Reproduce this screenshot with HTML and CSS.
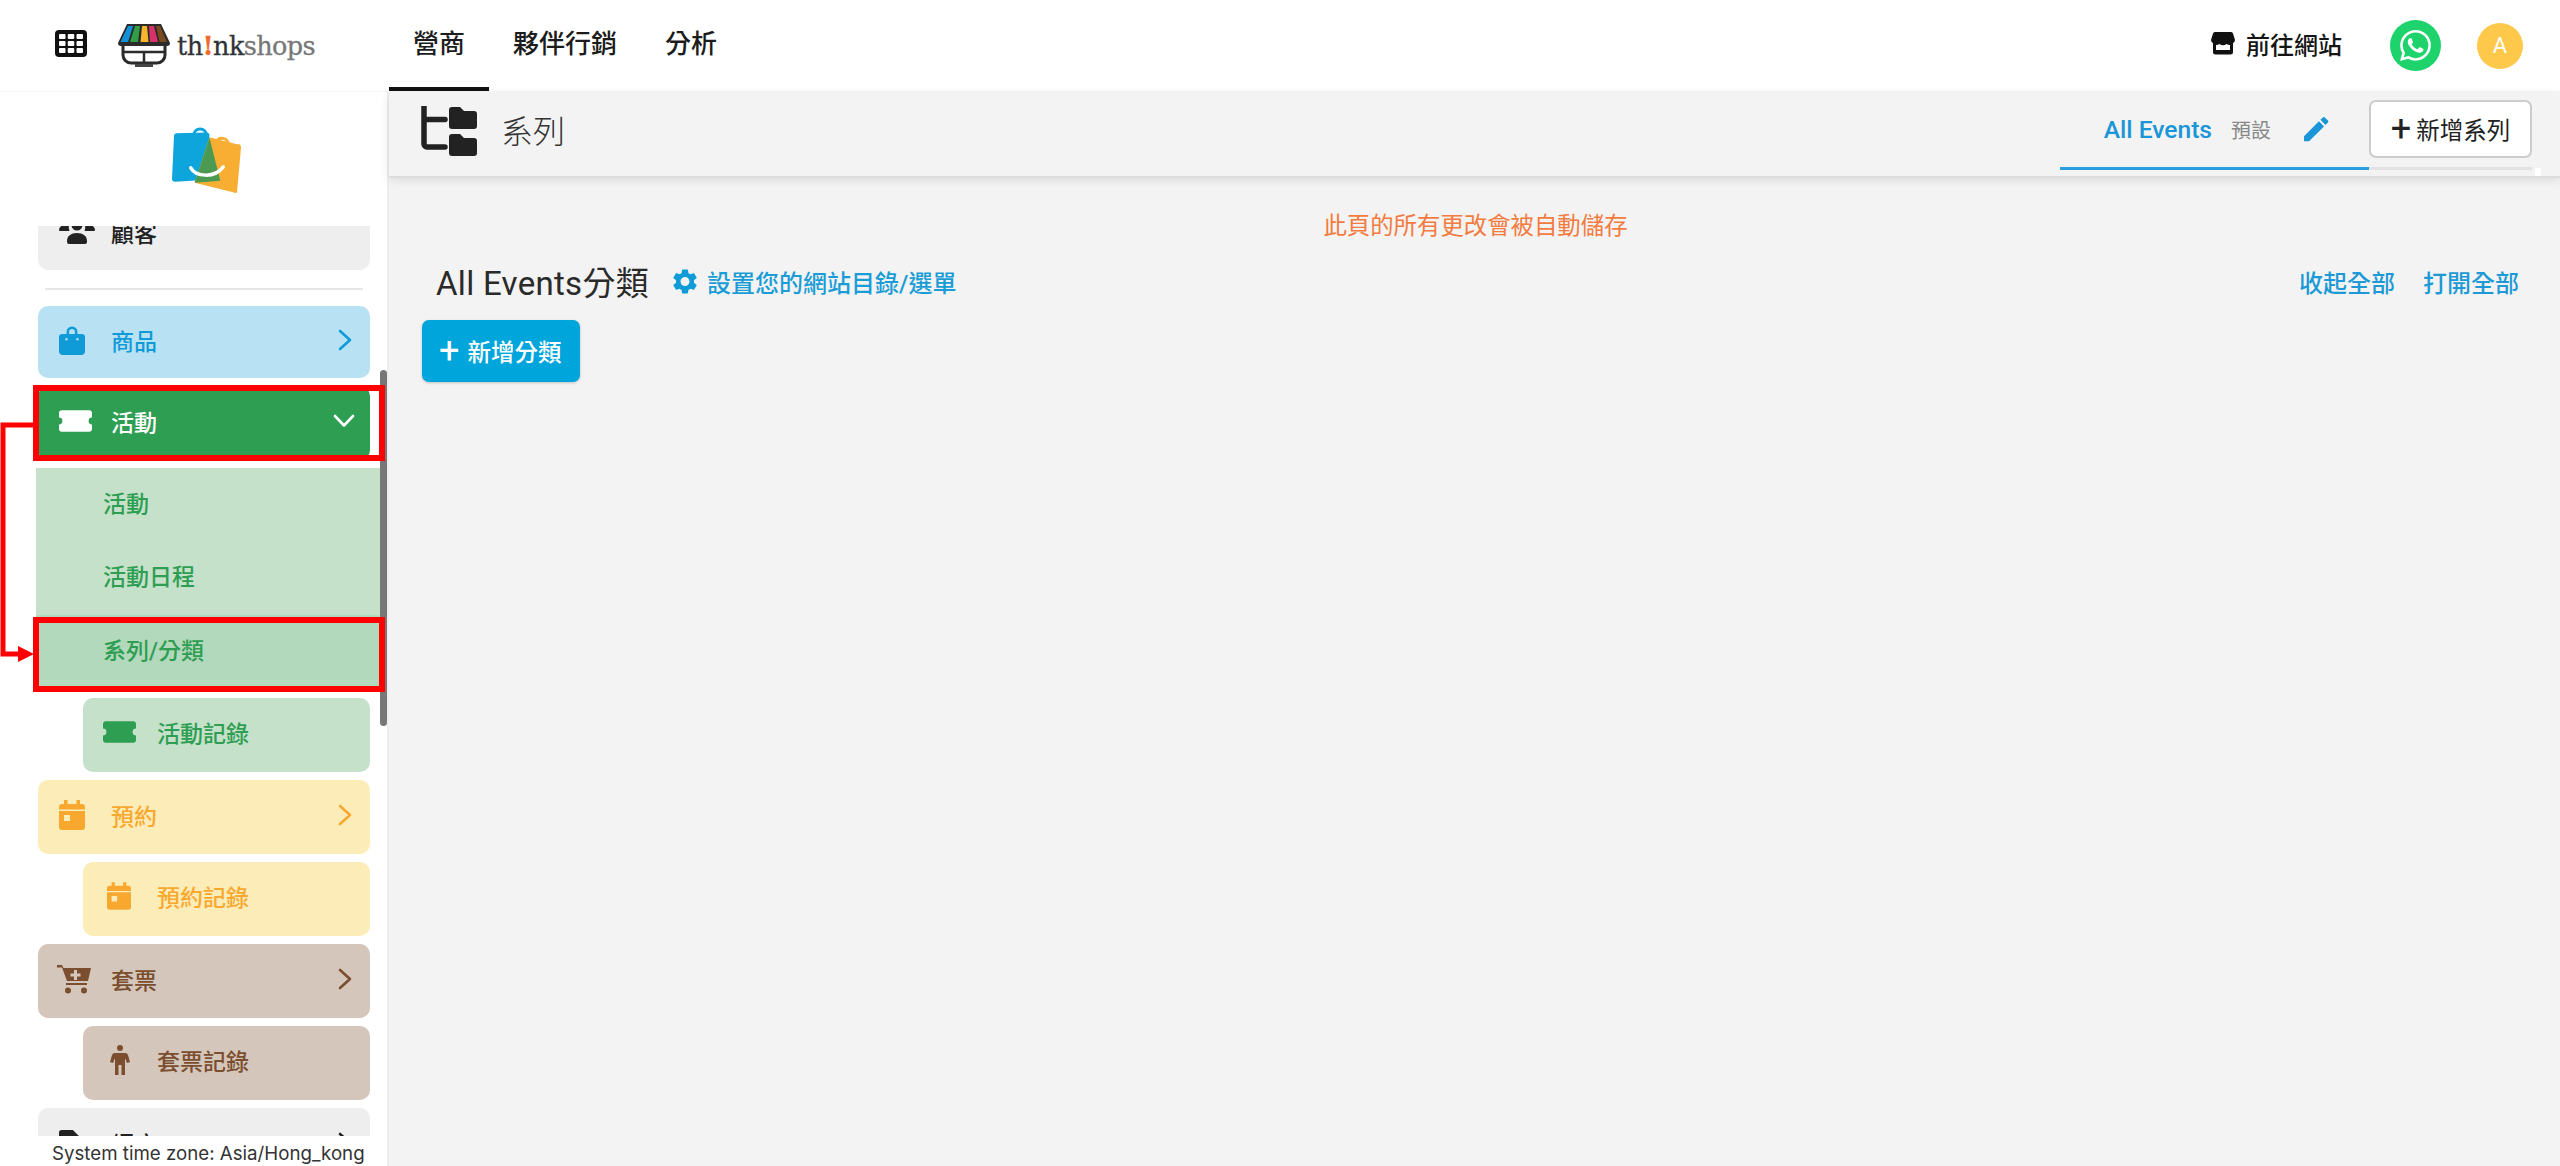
FILE: index.html
```html
<!DOCTYPE html>
<html lang="zh-Hant">
<head>
<meta charset="utf-8">
<title>系列</title>
<link rel="stylesheet" href="styles.css">
</head>
<body>
<svg class="defs" width="0" height="0" aria-hidden="true">
  <symbol id="i-chev" viewBox="0 0 14 22"><path d="M2 2l10 9-10 9" fill="none" stroke="currentColor" stroke-width="2.6" stroke-linecap="round" stroke-linejoin="round"/></symbol>
  <symbol id="i-bag" viewBox="0 0 26 30"><path d="M7.5 10V7a5.5 5.5 0 0 1 11 0v3h-2.6V7a2.9 2.9 0 0 0-5.800 0v3z" fill="currentColor"/><path d="M3 9h20a3 3 0 0 1 3 3v14a4 4 0 0 1-4 4H4a4 4 0 0 1-4-4V12a3 3 0 0 1 3-3zm4.500 4a1.300 1.300 0 1 0 0 2.600 1.300 1.300 0 0 0 0-2.600zm11 0a1.300 1.300 0 1 0 0 2.600 1.300 1.300 0 0 0 0-2.600z" fill="currentColor" fill-rule="evenodd"/></symbol>
  <symbol id="i-ticket" viewBox="0 0 34 22"><path d="M3 0h28a3 3 0 0 1 3 3v4.500a3.500 3.500 0 0 0 0 7V19a3 3 0 0 1-3 3H3a3 3 0 0 1-3-3v-4.500a3.500 3.500 0 0 0 0-7V3a3 3 0 0 1 3-3z" fill="currentColor"/></symbol>
  <symbol id="i-cal" viewBox="0 0 26 30"><path d="M5 0h3.500v4h9V0H21v4h2a3 3 0 0 1 3 3v20a3 3 0 0 1-3 3H3a3 3 0 0 1-3-3V7a3 3 0 0 1 3-3h2zM0 9.500v1.500h26V9.500zM5 15v6h6v-6z" fill="currentColor" fill-rule="evenodd"/></symbol>
  <symbol id="i-cart" viewBox="0 0 34 30"><path d="M0 1h5l1.500 3H34l-3 13H10L5 3.500H0z" fill="currentColor"/><path d="M9 19h21v2H9z" fill="currentColor"/><path d="M20 6v3.500h3.500v3H20V16h-3v-3.500h-3.500v-3H17V6z" fill="#d5c6bc"/><circle cx="11" cy="26.500" r="3" fill="currentColor"/><circle cx="27" cy="26.500" r="3" fill="currentColor"/></symbol>
  <symbol id="i-person" viewBox="0 0 20 30"><circle cx="10" cy="3" r="3" fill="currentColor"/><path d="M5 8h10c1.500 0 2.500.7 3 2l2 7-3 1-2-5v17h-3.500V20h-3v10H5V13l-2 5-3-1 2-7c.5-1.300 1.500-2 3-2z" fill="currentColor"/></symbol>
  <symbol id="i-users" viewBox="0 0 36 24"><circle cx="18" cy="5" r="5.500" fill="currentColor"/><path d="M0 10c0-3 3-5 6-5 1.500 0 3 .6 4 1.500C9.500 8 10 9.500 10.500 11H1a1 1 0 0 1-1-1z M36 10c0-3-3-5-6-5-1.500 0-3 .6-4 1.500.5 1.500 0 3-.5 4.500H35a1 1 0 0 0 1-1z" fill="currentColor"/><path d="M8 21c0-5 4-8 10-8s10 3 10 8v1a2 2 0 0 1-2 2H10a2 2 0 0 1-2-2z" fill="currentColor"/></symbol>
  <symbol id="i-doc" viewBox="0 0 30 30"><path d="M3 0h13l12 12v15a3 3 0 0 1-3 3H3a3 3 0 0 1-3-3V3a3 3 0 0 1 3-3z" fill="currentColor"/></symbol>
  <symbol id="i-folder" viewBox="0 0 28 22"><path d="M0 3a3 3 0 0 1 3-3h8l4 4h10a3 3 0 0 1 3 3v12a3 3 0 0 1-3 3H3a3 3 0 0 1-3-3z" fill="currentColor"/></symbol>
</svg>

<header class="topbar">
  <div class="brand">
    <svg class="grid-icon" viewBox="0 0 32 27" aria-hidden="true">
      <rect width="32" height="27" rx="4" fill="#111"/>
      <g fill="#fff"><rect x="4" y="4" width="6.500" height="5" rx="1"/><rect x="12.750" y="4" width="6.500" height="5" rx="1"/><rect x="21.500" y="4" width="6.500" height="5" rx="1"/><rect x="4" y="11" width="6.500" height="5" rx="1"/><rect x="12.750" y="11" width="6.500" height="5" rx="1"/><rect x="21.500" y="11" width="6.500" height="5" rx="1"/><rect x="4" y="18" width="6.500" height="5" rx="1"/><rect x="12.750" y="18" width="6.500" height="5" rx="1"/><rect x="21.500" y="18" width="6.500" height="5" rx="1"/></g>
    </svg>
    <svg class="store-logo" viewBox="0 0 54 44" aria-hidden="true">
      <path d="M6 20v12a8 8 0 0 0 8 8h26a8 8 0 0 0 8-8V20z" fill="#fff" stroke="#2b2b2b" stroke-width="3"/>
      <path d="M6 29h42M27 29v10" stroke="#2b2b2b" stroke-width="2.500"/>
      <path d="M18 42.500h18" stroke="#444" stroke-width="3"/>
      <path d="M10 1h34l9 19a3 3 0 0 1-3 3H4a3 3 0 0 1-3-3z" fill="#2b2b2b"/>
      <path d="M11 3h5l-5 16H3.500z" fill="#1591d8"/>
      <path d="M18 3h5l-2 16h-8z" fill="#2f9e44"/>
      <path d="M25 3h5l1.500 16h-8z" fill="#f7b52c"/>
      <path d="M32 3h5l4 16h-8z" fill="#d8326b"/>
      <path d="M39 3h4l7 16h-7.500z" fill="#7a4a21"/>
    </svg>
    <span class="wordmark">th<span class="wm-bang">!</span>nk<span class="wm-light">shops</span></span>
  </div>
  <nav class="mainnav">
    <a class="mainnav-item is-active">營商</a>
    <a class="mainnav-item">夥伴行銷</a>
    <a class="mainnav-item">分析</a>
  </nav>
  <div class="top-actions">
    <a class="visit-link">
      <svg class="store-icon" viewBox="0 0 24 24" aria-hidden="true"><path d="M4 1h16a2 2 0 0 1 2 1.500L24 9a3.500 3.500 0 0 1-2 3.200V21a2.500 2.500 0 0 1-2.500 2.500h-15A2.500 2.500 0 0 1 2 21v-8.800A3.500 3.500 0 0 1 0 9l2-6.500A2 2 0 0 1 4 1zm1 13v5h14v-5a6 6 0 0 1-3.500-1 6 6 0 0 1-7 0A6 6 0 0 1 5 14z" fill="#111" fill-rule="evenodd"/></svg>
      <span>前往網站</span>
    </a>
    <span class="wa-badge">
      <svg viewBox="0 0 24 24" aria-hidden="true"><path fill="#fff" d="M17.472 14.382c-.297-.149-1.758-.867-2.03-.967-.273-.099-.471-.148-.67.15-.197.297-.767.966-.94 1.164-.173.199-.347.223-.644.075-.297-.15-1.255-.463-2.39-1.475-.883-.788-1.48-1.761-1.653-2.059-.173-.297-.018-.458.13-.606.134-.133.298-.347.446-.52.149-.174.198-.298.298-.497.099-.198.05-.371-.025-.52-.075-.149-.669-1.612-.916-2.207-.242-.579-.487-.5-.669-.51-.173-.008-.371-.01-.57-.01-.198 0-.52.074-.792.372-.272.297-1.04 1.016-1.04 2.479 0 1.462 1.065 2.875 1.213 3.074.149.198 2.096 3.2 5.077 4.487.709.306 1.262.489 1.694.625.712.227 1.36.195 1.871.118.571-.085 1.758-.719 2.006-1.413.248-.694.248-1.289.173-1.413-.074-.124-.272-.198-.57-.347m-5.421 7.403h-.004a9.87 9.87 0 01-5.031-1.378l-.361-.214-3.741.982.998-3.648-.235-.374a9.86 9.86 0 01-1.51-5.26c.001-5.45 4.436-9.884 9.888-9.884 2.64 0 5.122 1.03 6.988 2.898a9.825 9.825 0 012.893 6.994c-.003 5.45-4.437 9.884-9.885 9.884m8.413-18.297A11.815 11.815 0 0012.05 0C5.495 0 .16 5.335.157 11.892c0 2.096.547 4.142 1.588 5.945L.057 24l6.305-1.654a11.882 11.882 0 005.683 1.448h.005c6.554 0 11.89-5.335 11.893-11.893a11.821 11.821 0 00-3.48-8.413z"/></svg>
    </span>
    <span class="avatar">A</span>
  </div>
</header>

<div class="shell">
  <aside class="sidebar">
    <div class="side-logo">
      <svg class="bags" viewBox="0 0 72 70" aria-hidden="true">
        <path d="M22 11a6.500 6.500 0 0 1 13 0" fill="none" stroke="#0ea5dc" stroke-width="3"/>
        <path d="M5 9l30-1a3 3 0 0 1 3 3L37 56l-34 2a3 3 0 0 1-3-3L2 12a3 3 0 0 1 3-3z" fill="#0ea5dc"/>
        <path d="M57 20a6.500 6.500 0 0 0-12-3" fill="none" stroke="#f8ae32" stroke-width="3"/>
        <path d="M38 13l28 7a3 3 0 0 1 4 3L66 68a2 2 0 0 1-3 1L23 59z" fill="#f8ae32"/>
        <path d="M38 13.500L49 57 23 59z" fill="#4c9a52"/>
        <path d="M19 44c5 9 24 11 33-1" fill="none" stroke="#fff" stroke-width="3.500" stroke-linecap="round"/>
      </svg>
    </div>
    <div class="side-scroll">
      <ul class="side-list">
        <li class="side-item tone-gray is-scrolled"><span class="icon-cell"><svg class="ic-users"><use href="#i-users"/></svg></span><span>顧客</span></li>
        <li class="side-divider"></li>
        <li class="side-item tone-blue is-short"><span class="icon-cell"><svg class="ic-26"><use href="#i-bag"/></svg></span><span>商品</span><svg class="chev"><use href="#i-chev"/></svg></li>
        <li class="side-item tone-green-solid"><span class="icon-cell"><svg class="ic-ticket"><use href="#i-ticket"/></svg></span><span>活動</span><svg class="chev-down" viewBox="0 0 22 14"><path d="M2 2l9 9.500L20 2" fill="none" stroke="currentColor" stroke-width="2.600" stroke-linecap="round" stroke-linejoin="round"/></svg></li>
        <li class="side-sub">
          <a class="side-sub-row">活動</a>
          <a class="side-sub-row">活動日程</a>
          <a class="side-sub-row is-current">系列/分類</a>
        </li>
        <li class="side-item side-child tone-green"><span class="icon-cell"><svg class="ic-ticket"><use href="#i-ticket"/></svg></span><span>活動記錄</span></li>
        <li class="side-item tone-yellow"><span class="icon-cell"><svg class="ic-26"><use href="#i-cal"/></svg></span><span>預約</span><svg class="chev"><use href="#i-chev"/></svg></li>
        <li class="side-item side-child tone-yellow"><span class="icon-cell"><svg class="ic-cal-small"><use href="#i-cal"/></svg></span><span>預約記錄</span></li>
        <li class="side-item tone-brown"><span class="icon-cell"><svg class="ic-cart"><use href="#i-cart"/></svg></span><span>套票</span><svg class="chev"><use href="#i-chev"/></svg></li>
        <li class="side-item side-child tone-brown"><span class="icon-cell"><svg class="ic-person"><use href="#i-person"/></svg></span><span>套票記錄</span></li>
        <li class="side-item tone-gray"><span class="icon-cell"><svg class="ic-26"><use href="#i-doc"/></svg></span><span>網店</span><svg class="chev"><use href="#i-chev"/></svg></li>
      </ul>
    </div>
    <div class="side-foot">System time zone: Asia/Hong_kong</div>

    <span class="scroll-thumb"></span>
    <span class="mark mark-activity"></span>
    <span class="mark mark-series"></span>
    <svg class="mark-arrow" viewBox="0 0 36 240" aria-hidden="true">
      <path d="M33 3H3v229h16" fill="none" stroke="#f00" stroke-width="5"/>
      <path d="M18 224l16 8-16 8z" fill="#f00"/>
    </svg>
  </aside>

  <main class="main">
    <div class="subhead">
      <div class="subhead-title">
        <svg class="tree-icon" viewBox="0 0 56 50" aria-hidden="true">
          <path d="M3 1v37a3 3 0 0 0 3 3h18M3 13.500h21" fill="none" stroke="#222" stroke-width="5.500" stroke-linecap="round"/>
          <use href="#i-folder" x="28" y="1" width="28" height="22" color="#222"/>
          <use href="#i-folder" x="28" y="28" width="28" height="22" color="#222"/>
        </svg>
        <h1>系列</h1>
      </div>
      <div class="tabs">
        <div class="tab">
          <span class="tab-name">All Events</span>
          <span class="tab-tag">預設</span>
          <svg class="tab-edit" viewBox="3 3 18.500 18.500" aria-hidden="true"><path fill="#1a95d8" d="M3 17.250V21h3.750L17.810 9.940l-3.750-3.750L3 17.250zM20.710 7.040a1 1 0 0 0 0-1.410l-2.340-2.340a1 1 0 0 0-1.410 0l-1.830 1.830 3.750 3.750 1.830-1.830z"/></svg>
        </div>
        <div class="tab-end">
          <button class="add-series"><span class="plus">+</span>新增系列</button>
        </div>
      </div>
      <span class="corner-dot"></span>
    </div>
    <div class="content">
      <p class="autosave">此頁的所有更改會被自動儲存</p>
      <div class="cat-head">
        <div class="cat-left">
          <h2>All Events分類</h2>
          <a class="menu-link">
            <svg class="gear" viewBox="2.500 2 19 20" aria-hidden="true"><path fill="#0f9bd7" d="M19.140 12.940c.04-.3.06-.61.06-.94 0-.32-.02-.64-.07-.94l2.030-1.580a.49.49 0 0 0 .12-.61l-1.920-3.320a.488.488 0 0 0-.59-.22l-2.390.96c-.5-.38-1.030-.7-1.620-.94l-.36-2.540a.484.484 0 0 0-.48-.41h-3.840c-.24 0-.43.17-.47.41l-.36 2.540c-.59.24-1.130.57-1.620.94l-2.390-.96c-.22-.08-.47 0-.59.22L2.740 8.870c-.12.21-.08.47.12.61l2.030 1.580c-.05.3-.09.63-.09.94s.02.64.07.94l-2.030 1.580a.49.49 0 0 0-.12.61l1.920 3.320c.12.22.37.29.59.22l2.390-.96c.5.38 1.030.7 1.620.94l.36 2.540c.05.24.24.41.48.41h3.840c.24 0 .44-.17.47-.41l.36-2.540c.59-.24 1.130-.56 1.620-.94l2.390.96c.22.08.47 0 .59-.22l1.920-3.320c.12-.22.07-.47-.12-.61l-2.010-1.580zM12 15.600c-1.980 0-3.600-1.620-3.600-3.600s1.620-3.600 3.600-3.600 3.600 1.620 3.600 3.600-1.620 3.600-3.600 3.600z"/></svg>
            <span>設置您的網站目錄/選單</span>
          </a>
        </div>
        <div class="cat-right">
          <a>收起全部</a>
          <a>打開全部</a>
        </div>
      </div>
      <button class="add-cat"><span class="plus">+</span>新增分類</button>
    </div>
  </main>
</div>
</body>
</html>
```
FILE: styles.css
```css
* { box-sizing: border-box; }
html, body { margin: 0; height: 100%; }
body {
  display: flex;
  flex-direction: column;
  height: 100vh;
  overflow: hidden;
  background: #fff;
  color: #222;
  font-family: Roboto, "Noto Sans CJK TC", sans-serif;
}
.defs { position: absolute; }
a { color: inherit; text-decoration: none; }
button { font: inherit; cursor: pointer; }
h1, h2, p, ul { margin: 0; padding: 0; }
ul { list-style: none; }

/* top bar */
.topbar {
  flex: none;
  height: 91px;
  display: flex;
  align-items: stretch;
  background: #fff;
}
.brand {
  width: 389px;
  display: flex;
  align-items: center;
  padding-left: 55px;
}
.grid-icon { width: 32px; height: 27px; margin-top: -4px; }
.store-logo { width: 54px; height: 44px; margin: -1px 0 0 30px; }
.wordmark {
  margin: 0 0 0 6px;
  font-family: "DejaVu Serif", serif;
  font-size: 25.5px;
  letter-spacing: -.6px;
  color: #2f3338;
  -webkit-text-stroke: .3px currentColor;
}
.wm-bang { color: #f26a2a; font-weight: 700; }
.wm-light { color: #777; }
.mainnav { display: flex; }
.mainnav-item {
  display: flex;
  align-items: center;
  height: 91px;
  padding: 0 24px 4px;
  font-size: 26px;
  font-weight: 500;
  color: #1c1c1c;
  border-bottom: 4px solid transparent;
}
.mainnav-item.is-active { border-bottom-color: #111; }
.top-actions {
  margin-left: auto;
  display: flex;
  align-items: center;
  padding: 0 37px 0 0;
}
.visit-link {
  display: flex;
  align-items: center;
  gap: 11px;
  font-size: 24px;
  font-weight: 500;
  color: #151515;
  margin-right: 48px;
  margin-top: -5px;
}
.store-icon { width: 24px; height: 24px; }
.wa-badge {
  width: 51px;
  height: 51px;
  border-radius: 50%;
  background: #1fd36c;
  display: flex;
  align-items: center;
  justify-content: center;
}
.wa-badge svg { width: 31px; height: 31px; }
.avatar {
  width: 46px;
  height: 46px;
  margin-left: 36px;
  border-radius: 50%;
  background: #fec94a;
  color: #fff;
  font-size: 22px;
  display: flex;
  align-items: center;
  justify-content: center;
}

/* shell */
.shell { flex: 1; min-height: 0; display: flex; }
.sidebar {
  position: relative;
  width: 389px;
  flex: none;
  display: flex;
  flex-direction: column;
  background: #fff;
  border-right: 2px solid #eee;
  border-top: 1px solid #f6f6f0;
}
.side-logo {
  flex: none;
  height: 134px;
  padding: 32px 0 0 172px;
}
.bags { display: block; width: 71px; height: 70px; }
.side-scroll { flex: 1; min-height: 0; overflow: hidden; }
.side-list { padding: 0 17px 0 38px; }
.side-item {
  display: flex;
  align-items: center;
  height: 74px;
  margin-top: 8px;
  padding-bottom: 5px;
  border-radius: 10px;
  font-size: 23px;
  font-weight: 500;
}
.side-item.is-short { height: 72px; margin-top: 0; }
.side-item.is-scrolled { margin-top: -29px; height: 73px; padding-bottom: 3px; }
.side-item.side-child { padding-bottom: 7px; }
.icon-cell {
  flex: none;
  width: 73px;
  display: flex;
  align-items: center;
  padding-left: 21px;
}
.side-child .icon-cell { width: 74px; padding-left: 20px; }
.chev { width: 14px; height: 22px; margin-right: 18px; margin-left: auto; flex: none; }
.chev-down { width: 22px; height: 14px; margin-right: 15px; margin-left: auto; flex: none; }
.side-divider { height: 2px; margin: 18px 7px 16px; background: #e6e6e6; }
.side-child { margin-left: 45px; }
.ic-26 { width: 26px; height: 30px; }
.ic-ticket { width: 33px; height: 22px; }
.ic-users { width: 36px; height: 24px; }
.ic-cal-small { width: 24px; height: 30px; margin-left: 4px; }
.ic-cart { width: 34px; height: 30px; margin-left: -2px; }
.ic-person { width: 20px; height: 30px; margin-left: 7px; }
.tone-gray { background: #eee; color: #222; }
.tone-blue { background: #b8e2f3; color: #0f9bd7; }
.tone-green-solid { background: #2e9e52; color: #fff; }
.tone-green { background: #c5e1ca; color: #2e9e52; }
.tone-yellow { background: #fcecb8; color: #f9a82f; }
.tone-brown { background: #d5c6bc; color: #7a4e2e; }
.side-sub {
  margin: 8px -10px 10px -2px;
  height: 220px;
  background: #c5e1ca;
  color: #2e9e52;
  font-size: 23px;
  font-weight: 500;
}
.side-sub + .side-item { margin-top: 0; }
.side-sub-row {
  display: flex;
  align-items: center;
  height: 73.3px;
  padding: 0 0 5px 67px;
}
.side-sub-row.is-current { background: #b2d9bb; }
.side-foot {
  flex: none;
  height: 30px;
  padding: 3px 0 0 52px;
  background: #fff;
  font-family: Inter, sans-serif;
  font-size: 18.7px;
  line-height: 30px;
  color: #333;
  white-space: nowrap;
}

/* overlays on the sidebar */
.scroll-thumb {
  position: absolute;
  left: 380px;
  top: 278px;
  width: 7px;
  height: 356px;
  border-radius: 4px;
  background: #777;
}
.mark { position: absolute; left: 33px; width: 352px; border: 6px solid #f00; }
.mark-activity { top: 293px; height: 76px; }
.mark-series { top: 525px; height: 75px; }
.mark-arrow {
  position: absolute;
  left: 0;
  top: 330px;
  width: 36px;
  height: 240px;
}

/* main */
.main { flex: 1; min-width: 0; display: flex; flex-direction: column; background: #f3f3f3; }
.subhead {
  position: relative;
  flex: none;
  height: 85px;
  display: flex;
  justify-content: space-between;
  align-items: flex-start;
  background: #f3f3f3;
  box-shadow: 0 2px 0 #dcdcdc, 0 4px 10px rgba(0,0,0,.1);
}
.subhead-title { display: flex; align-items: center; padding: 15px 0 0 32px; }
.tree-icon { width: 56px; height: 50px; }
.subhead-title h1 { margin: -4px 0 0 24px; font-size: 32px; font-weight: 300; color: #333; }
.tabs { display: flex; margin-right: 28px; height: 79px; }
.tab {
  width: 309px;
  display: flex;
  align-items: center;
  justify-content: flex-end;
  padding-right: 40px;
  border-bottom: 3px solid #2a9fdf;
}
.tab-name { font-size: 24.6px; font-weight: 500; color: #1a95d8; }
.tab-tag { margin-left: 19px; font-size: 20px; color: #888; }
.tab-edit { width: 25px; height: 25px; margin-left: 33px; }
.tab-end { border-bottom: 3px solid #e2e2e2; padding-top: 9px; }
.add-series {
  display: flex;
  align-items: center;
  justify-content: center;
  width: 163px;
  height: 58px;
  background: #fff;
  border: 2px solid #ccc;
  border-radius: 7px;
  font-size: 23.5px;
  color: #222;
  padding: 0;
}
.plus { font-size: 36px; line-height: 1; margin-right: 5px; font-weight: 400; }
.corner-dot {
  position: absolute;
  right: 19px;
  top: 77px;
  width: 6px;
  height: 8px;
  background: #fff;
}
.content { flex: 1; padding: 0 41px 0 33px; }
.autosave {
  margin: 38px 0 0;
  padding-left: 10px;
  text-align: center;
  font-size: 23.4px;
  line-height: 24px;
  color: #f47b3e;
}
.cat-head {
  display: flex;
  justify-content: space-between;
  align-items: center;
  margin-top: 19px;
  padding-left: 14px;
}
.cat-left { display: flex; align-items: center; }
.cat-left h2 { font-size: 33px; font-weight: 400; letter-spacing: .3px; color: #2a2a2a; }
.menu-link {
  display: flex;
  align-items: center;
  gap: 10px;
  margin-left: 24px;
  font-size: 24px;
  font-weight: 500;
  color: #1a9dd6;
}
.gear { width: 24px; height: 25px; }
.cat-right { display: flex; gap: 28px; font-size: 24px; font-weight: 500; color: #1d9ad6; }
.add-cat {
  display: flex;
  align-items: center;
  width: 158px;
  height: 62px;
  margin-top: 15px;
  padding: 0 0 0 17px;
  border: 0;
  border-radius: 7px;
  background: #00a5dc;
  color: #fff;
  font-size: 23.5px;
  font-weight: 500;
  box-shadow: 0 1px 3px rgba(0,0,0,.2);
}
.add-cat .plus { margin-right: 8px; }
```
